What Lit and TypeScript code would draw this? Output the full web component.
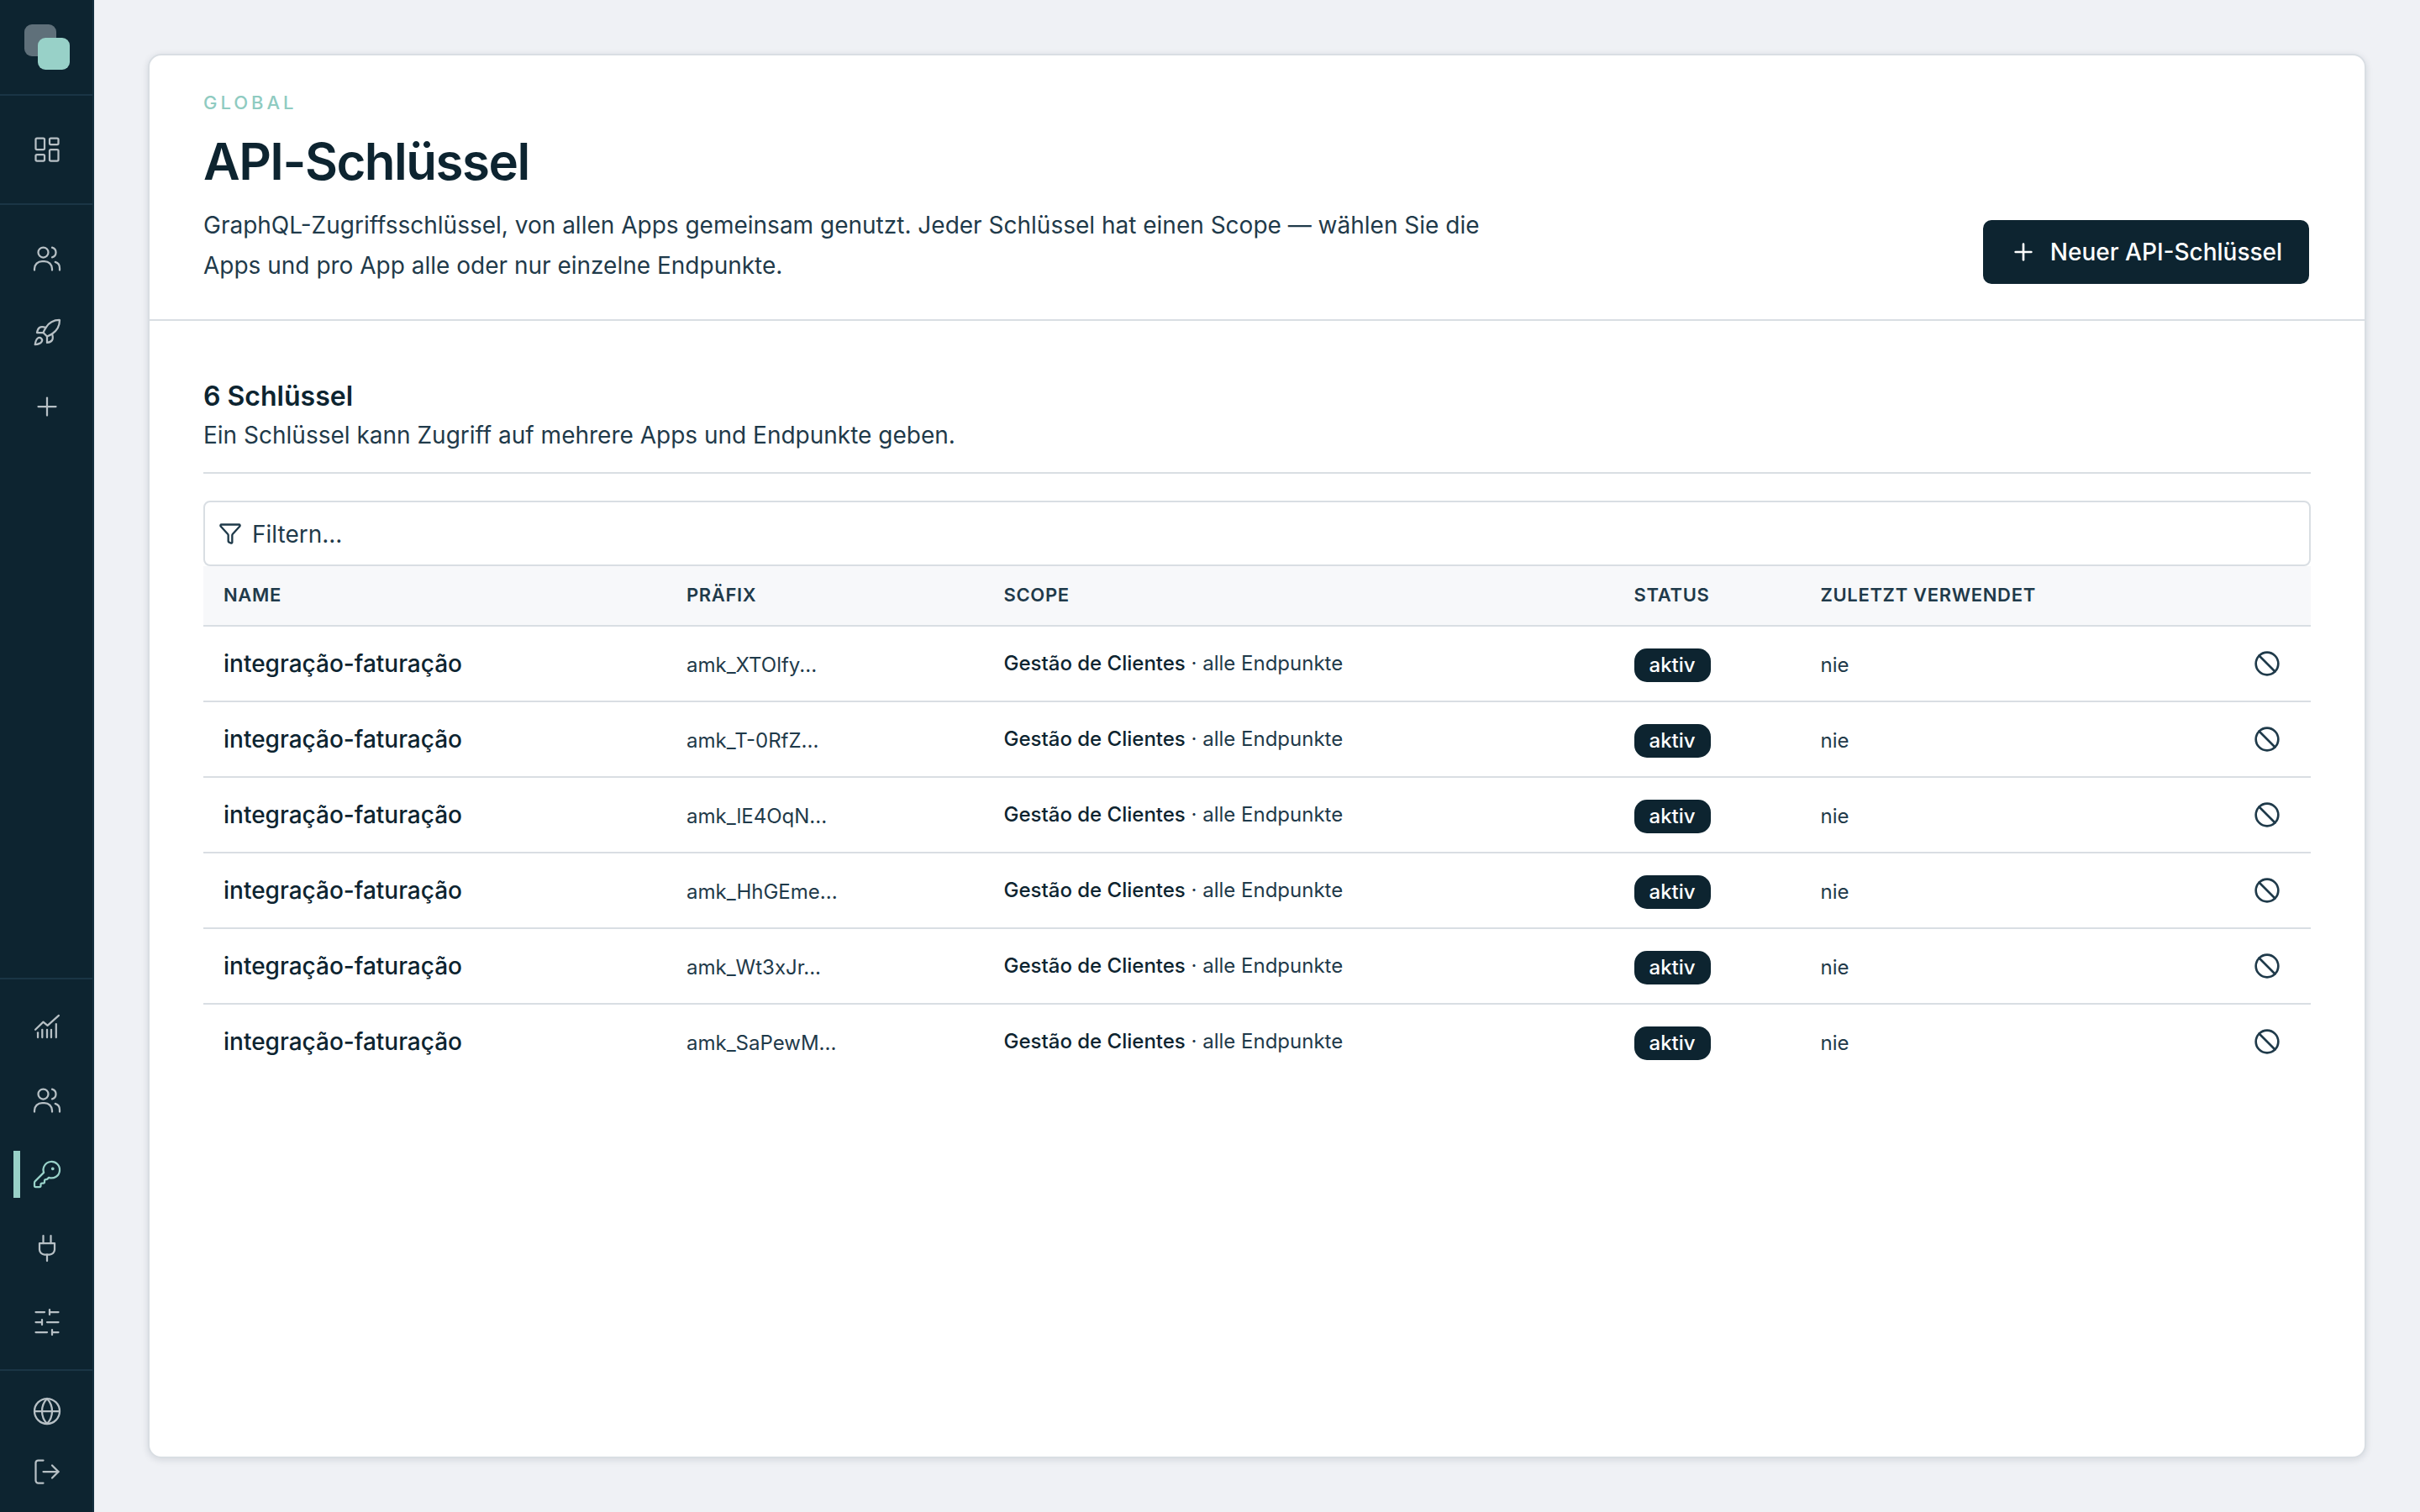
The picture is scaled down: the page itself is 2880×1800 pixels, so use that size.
import { LitElement, html, css, svg } from 'lit';
import { customElement } from 'lit/decorators.js';

const icons: Record<string, unknown> = {
	dashboard: svg`<rect x="3" y="3" width="7" height="9" rx="1"/><rect x="14" y="3" width="7" height="5" rx="1"/><rect x="14" y="12" width="7" height="9" rx="1"/><rect x="3" y="16" width="7" height="5" rx="1"/>`,
	users: svg`<path d="M2 21v-1a6 6 0 0 1 6-6h2a6 6 0 0 1 6 6v1"/><circle cx="9" cy="7" r="4"/><path d="M18.5 14.6A5 5 0 0 1 22 19.5V21"/><path d="M16 3.13a4 4 0 0 1 0 7.75"/>`,
	rocket: svg`<path d="M4.5 16.5c-1.5 1.26-2 5-2 5s3.74-.5 5-2c.71-.84.7-2.13-.09-2.91a2.18 2.18 0 0 0-2.91-.09z"/><path d="m12 15-3-3a22 22 0 0 1 2-3.95A12.88 12.88 0 0 1 22 2c0 2.72-.78 7.5-6 11a22.35 22.35 0 0 1-4 2z"/><path d="M9 12H4s.55-3.03 2-4c1.62-1.08 5 0 5 0"/><path d="M12 15v5s3.03-.55 4-2c1.08-1.62 0-5 0-5"/>`,
	plus: svg`<path d="M5 12h14"/><path d="M12 5v14"/>`,
	chart: svg`<path d="M2.7 14.5 9 8.4 12.4 11.3 21.3 3.3"/><path d="M4.7 16.9v3.8"/><path d="M8.2 14.5v6.2"/><path d="M12 14.5v6.2"/><path d="M15.3 14.5v6.2"/><path d="M19.2 10v10.7"/>`,
	key: svg`<path d="M2.586 17.414A2 2 0 0 0 2 18.828V21a1 1 0 0 0 1 1h3a1 1 0 0 0 1-1v-1a1 1 0 0 1 1-1h1a1 1 0 0 0 1-1v-1a1 1 0 0 1 1-1h.172a2 2 0 0 0 1.414-.586l.814-.814a6.5 6.5 0 1 0-4-4z"/><circle cx="16.5" cy="7.5" r=".5" fill="currentColor"/>`,
	plug: svg`<path d="M12 22v-5"/><path d="M9 8V2"/><path d="M15 8V2"/><path d="M18 8v5a4 4 0 0 1-4 4h-4a4 4 0 0 1-4-4V8Z"/>`,
	sliders: svg`<path d="M21 4h-7"/><path d="M10 4H3"/><path d="M21 12h-9"/><path d="M8 12H3"/><path d="M21 20h-5"/><path d="M12 20H3"/><path d="M14 2v4"/><path d="M8 10v4"/><path d="M16 18v4"/>`,
	globe: svg`<circle cx="12" cy="12" r="10"/><path d="M12 2a14.5 14.5 0 0 0 0 20 14.5 14.5 0 0 0 0-20"/><path d="M2 12h20"/>`,
	logout: svg`<path d="m16 17 5-5-5-5"/><path d="M21 12H9"/><path d="M9 21H5a2 2 0 0 1-2-2V5a2 2 0 0 1 2-2h4"/>`,
	ban: svg`<circle cx="12" cy="12" r="10"/><path d="m4.9 4.9 14.2 14.2"/>`,
	funnel: svg`<path d="M10 20a1 1 0 0 0 .553.895l2 1A1 1 0 0 0 14 21v-7a2 2 0 0 1 .517-1.341L21.74 4.67A1 1 0 0 0 21 3H3a1 1 0 0 0-.742 1.67l7.225 7.989A2 2 0 0 1 10 14z"/>`,
};

function icon(name: string, size: number, stroke: number) {
	return html`<svg width=${size} height=${size} viewBox="0 0 24 24" fill="none" stroke="currentColor"
		stroke-width=${stroke} stroke-linecap="round" stroke-linejoin="round">${icons[name]}</svg>`;
}

const prefixes = ['amk_XTOlfy...', 'amk_T-0RfZ...', 'amk_lE4OqN...', 'amk_HhGEme...', 'amk_Wt3xJr...', 'amk_SaPewM...'];

@customElement('app-root')
export class AppRoot extends LitElement {
	static styles = css`
		:host {
			display: flex;
			height: 100vh;
			background: #eff1f5;
			font-family: Inter, sans-serif;
			color: #0d2430;
		}

		.sidebar {
			width: 112px;
			box-sizing: border-box;
			flex: none;
			background: #0d2430;
			border-right: 2px solid #14303f;
			display: flex;
			flex-direction: column;
			color: #b7c0c5;
		}
		.logo {
			height: 114px;
			box-sizing: border-box;
			padding: 29px 0 0 29px;
			flex: none;
			border-bottom: 2px solid #1a3545;
		}
		.logo-mark {
			width: 54px;
			height: 54px;
			display: block;
		}
		.nav-group {
			display: flex;
			flex-direction: column;
			gap: 32px;
			padding: 36px 0;
		}
		.nav-group.line {
			border-bottom: 2px solid #1a3545;
		}
		.nav-group.low {
			padding: 28px 0;
			border-top: 2px solid #1a3545;
		}
		.nav-group.foot {
			gap: 16px;
			padding: 20px 0;
		}
		.spacer {
			flex: 1;
		}
		.nav-item {
			height: 56px;
			padding-left: 2px;
			display: flex;
			align-items: center;
			justify-content: center;
			position: relative;
		}
		.nav-item.active {
			color: #98d1c8;
		}
		.nav-item.active::before {
			content: '';
			position: absolute;
			left: 16px;
			top: 0;
			bottom: 0;
			width: 8px;
			background: #98d1c8;
		}

		.main {
			flex: 1;
			display: flex;
			padding: 64px;
			min-width: 0;
		}
		.card {
			flex: 1;
			min-width: 0;
			background: #fff;
			border: 2px solid #d9dee3;
			border-radius: 16px;
			box-shadow: 0 2px 8px rgba(13, 36, 48, 0.12);
		}
		.head {
			display: flex;
			justify-content: space-between;
			align-items: flex-end;
			padding: 42px 66px 40px 64px;
			border-bottom: 2px solid #d9dee3;
		}
		.eyebrow {
			font-size: 22px;
			line-height: 28px;
			font-weight: 500;
			letter-spacing: 0.18em;
			color: #8fcbc1;
		}
		h1 {
			margin: 20px 0 16px;
			font-size: 60px;
			line-height: 72px;
			font-weight: 600;
			letter-spacing: -0.025em;
			color: #0d2430;
		}
		.desc {
			margin: 0;
			width: 1560px;
			font-size: 28px;
			line-height: 48px;
			color: #1f3a4a;
		}
		.new-btn {
			height: 76px;
			width: 388px;
			box-sizing: border-box;
			display: flex;
			align-items: center;
			justify-content: center;
			gap: 16px;
			border: none;
			border-radius: 10px;
			background: #0d2430;
			color: #fff;
			font: 500 28px Inter, sans-serif;
			margin-bottom: 2px;
		}
		.body {
			padding: 68px 64px 0;
		}
		h2 {
			margin: 0;
			font-size: 32px;
			line-height: 44px;
			font-weight: 600;
			color: #0d2430;
		}
		.sub {
			margin: 2px 0 0;
			font-size: 28px;
			line-height: 44px;
			color: #1f3a4a;
		}
		.rule {
			height: 2px;
			background: #d9dee3;
			margin: 22px 0 32px;
		}
		.filter {
			height: 78px;
			box-sizing: border-box;
			display: flex;
			align-items: center;
			gap: 12px;
			padding-left: 16px;
			border: 2px solid #d9dee3;
			border-radius: 8px;
			font-size: 28px;
			color: #1f3a4a;
		}
		.filter span {
			padding-top: 2px;
		}
		.row {
			display: grid;
			grid-template-columns: 551px 377.5px 750px 222px 1fr 92px;
			align-items: center;
			border-bottom: 2px solid #d9dee3;
			height: 90px;
			box-sizing: border-box;
			font-size: 24px;
			color: #1f3a4a;
		}
		.row > * {
			padding-left: 24px;
		}
		.row:last-child {
			border-bottom-color: transparent;
		}
		.row.titles {
			height: 72px;
			background: #f7f8fa;
			font-size: 22px;
			font-weight: 600;
			letter-spacing: 0.03em;
		}
		.row.titles > * {
			padding-bottom: 2px;
		}
		.name {
			font-size: 28px;
			font-weight: 500;
			color: #0d2430;
		}
		.low-text {
			padding-top: 2px;
		}
		.scope {
			padding-bottom: 2px;
		}
		.scope b {
			font-weight: 500;
			color: #0d2430;
		}
		.badge {
			display: inline-block;
			padding: 0 18px;
			height: 40px;
			line-height: 40px;
			border-radius: 15px;
			background: #0d2430;
			color: #fff;
			font-weight: 500;
			position: relative;
			top: 2px;
		}
		.action {
			display: flex;
			color: #1f3a4a;
		}
	`;

	private navItem(name: string, active = false) {
		return html`<div class="nav-item ${active ? 'active' : ''}">${icon(name, 36, 1.5)}</div>`;
	}

	render() {
		return html`
			<nav class="sidebar">
				<div class="logo">
					<svg class="logo-mark" viewBox="0 0 54 54">
						<rect x="0" y="0" width="38" height="38" rx="9" fill="#5f707a"/>
						<rect x="16" y="16" width="38" height="38" rx="9" fill="#98d1c8"/>
					</svg>
				</div>
				<div class="nav-group line">${this.navItem('dashboard')}</div>
				<div class="nav-group">
					${this.navItem('users')}
					${this.navItem('rocket')}
					${this.navItem('plus')}
				</div>
				<div class="spacer"></div>
				<div class="nav-group low line">
					${this.navItem('chart')}
					${this.navItem('users')}
					${this.navItem('key', true)}
					${this.navItem('plug')}
					${this.navItem('sliders')}
				</div>
				<div class="nav-group foot">
					${this.navItem('globe')}
					${this.navItem('logout')}
				</div>
			</nav>
			<main class="main">
				<section class="card">
					<header class="head">
						<div>
							<div class="eyebrow">GLOBAL</div>
							<h1>API-Schlüssel</h1>
							<p class="desc">GraphQL-Zugriffsschlüssel, von allen Apps gemeinsam genutzt. Jeder Schlüssel hat einen Scope — wählen Sie die Apps und pro App alle oder nur einzelne Endpunkte.</p>
						</div>
						<button class="new-btn">${icon('plus', 32, 2)}Neuer API-Schlüssel</button>
					</header>
					<div class="body">
						<h2>6 Schlüssel</h2>
						<p class="sub">Ein Schlüssel kann Zugriff auf mehrere Apps und Endpunkte geben.</p>
						<div class="rule"></div>
						<div class="filter">${icon('funnel', 28, 2)}<span>Filtern...</span></div>
						<div class="row titles">
							<span>NAME</span><span>PRÄFIX</span><span>SCOPE</span><span>STATUS</span><span>ZULETZT VERWENDET</span><span></span>
						</div>
						${prefixes.map(p => html`
							<div class="row">
								<span class="name">integração-faturação</span>
								<span class="low-text">${p}</span>
								<span class="scope"><b>Gestão de Clientes</b> · alle Endpunkte</span>
								<span><span class="badge">aktiv</span></span>
								<span class="low-text">nie</span>
								<span class="action">${icon('ban', 32, 2)}</span>
							</div>
						`)}
					</div>
				</section>
			</main>
		`;
	}
}
